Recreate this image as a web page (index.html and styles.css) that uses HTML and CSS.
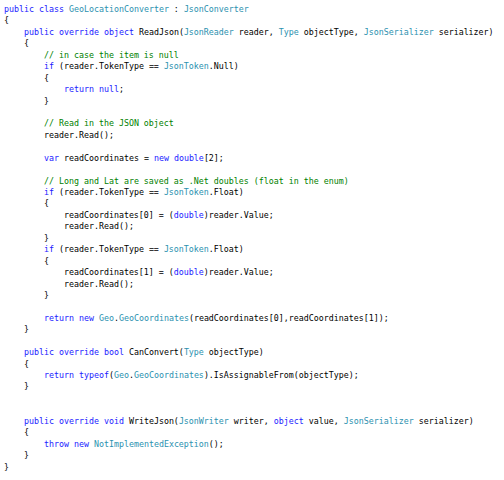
FILE: index.html
```html
<!DOCTYPE html>
<html>
<head>
<meta charset="utf-8">
<link rel="stylesheet" href="styles.css">
</head>
<body>
<pre class="code"><span class="k">public</span> <span class="k">class</span> <span class="t">GeoLocationConverter</span> : <span class="t">JsonConverter</span>
{
    <span class="k">public</span> <span class="k">override</span> <span class="k">object</span> ReadJson(<span class="t">JsonReader</span> reader, <span class="t">Type</span> objectType, <span class="t">JsonSerializer</span> serializer)
    {
        <span class="c">// in case the item is null</span>
        <span class="k">if</span> (reader.TokenType == <span class="t">JsonToken</span>.Null)
        {
            <span class="k">return</span> <span class="k">null</span>;
        }

        <span class="c">// Read in the JSON object</span>
        reader.Read();

        <span class="k">var</span> readCoordinates = <span class="k">new</span> <span class="k">double</span>[2];

        <span class="c">// Long and Lat are saved as .Net doubles (float in the enum)</span>
        <span class="k">if</span> (reader.TokenType == <span class="t">JsonToken</span>.Float)
        {
            readCoordinates[0] = (<span class="k">double</span>)reader.Value;
            reader.Read();
        }
        <span class="k">if</span> (reader.TokenType == <span class="t">JsonToken</span>.Float)
        {
            readCoordinates[1] = (<span class="k">double</span>)reader.Value;
            reader.Read();
        }

        <span class="k">return</span> <span class="k">new</span> <span class="t">Geo</span>.<span class="t">GeoCoordinates</span>(readCoordinates[0],readCoordinates[1]);
    }

    <span class="k">public</span> <span class="k">override</span> <span class="k">bool</span> CanConvert(<span class="t">Type</span> objectType)
    {
        <span class="k">return</span> <span class="k">typeof</span>(<span class="t">Geo</span>.<span class="t">GeoCoordinates</span>).IsAssignableFrom(objectType);
    }


    <span class="k">public</span> <span class="k">override</span> <span class="k">void</span> WriteJson(<span class="t">JsonWriter</span> writer, <span class="k">object</span> value, <span class="t">JsonSerializer</span> serializer)
    {
        <span class="k">throw</span> <span class="k">new</span> <span class="t">NotImplementedException</span>();
    }
}</pre>
</body>
</html>
```
FILE: styles.css
```css
html, body {
  margin: 0;
  padding: 0;
  background: #ffffff;
}
.code {
  margin: 0;
  padding: 4px 0 0 4px;
  font-family: "DejaVu Sans Mono", "Liberation Mono", monospace;
  font-size: 8.3px;
  line-height: 11.43px;
  color: #000000;
}
.k { color: #1a1aff; }
.t { color: #2b91af; }
.c { color: #008000; }
```
